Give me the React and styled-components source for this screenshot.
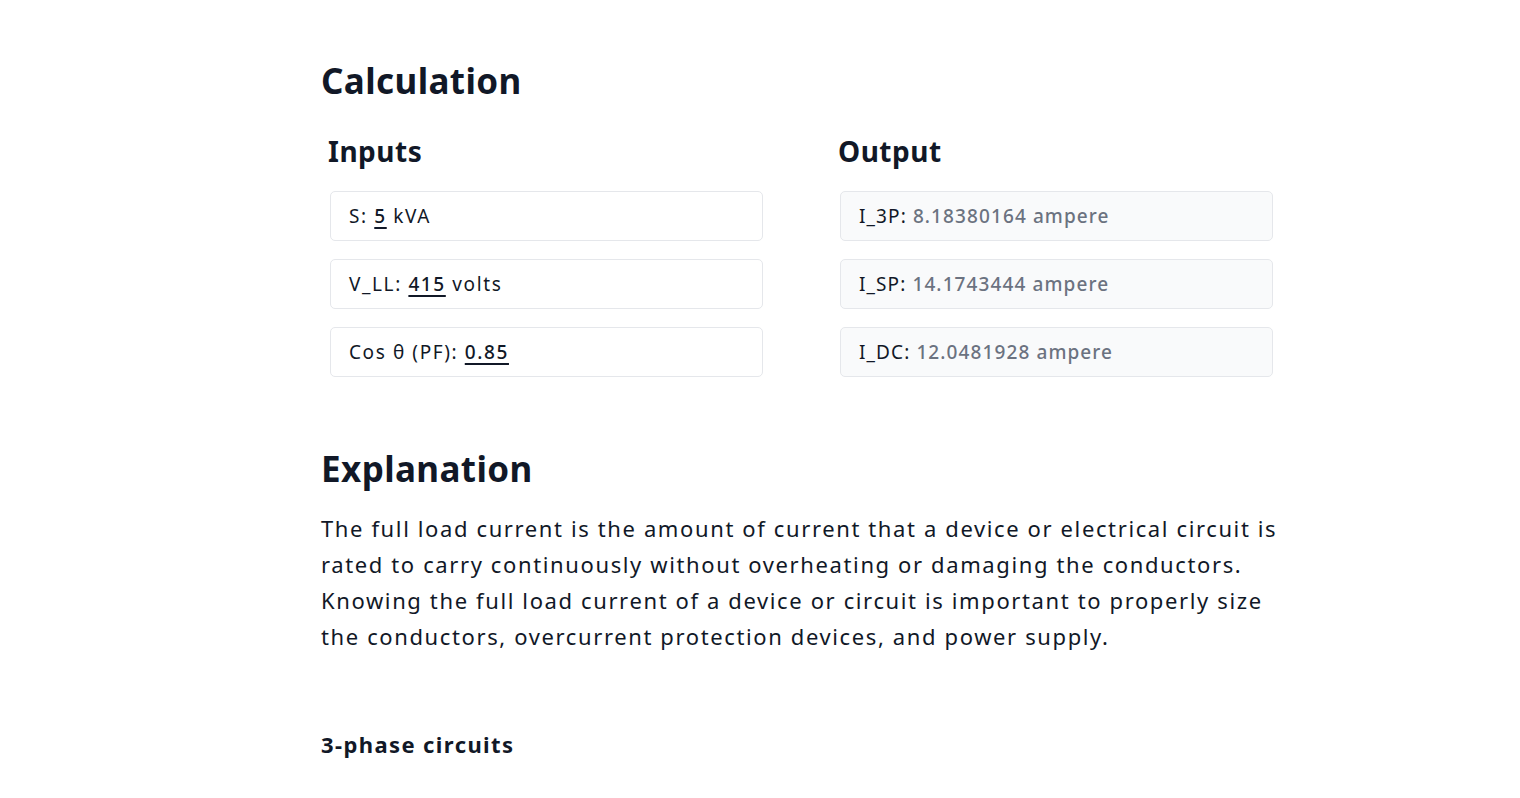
import React from "react";
import styled, { createGlobalStyle } from "styled-components";

const GlobalStyle = createGlobalStyle`
  body {
    margin: 0;
    background: #ffffff;
    font-family: "Noto Sans", "Open Sans", sans-serif;
    color: #111827;
  }
`;

const Page = styled.main`
  width: 960px;
  margin-left: 321px;
  padding-top: 58px;
`;

const Title = styled.h2`
  margin: 0;
  font-size: 35px;
  line-height: 46px;
  font-weight: 700;
  letter-spacing: 0.4px;
  color: #111827;
`;

const Columns = styled.div`
  display: grid;
  grid-template-columns: 510px 510px;
  margin-top: 29px;
`;

const Column = styled.section`
  display: flex;
  flex-direction: column;
  gap: 18px;
`;

const ColumnTitle = styled.h3`
  margin: 0 0 4px 7px;
  font-size: 28px;
  line-height: 36px;
  font-weight: 700;
  letter-spacing: 0.5px;
  color: #111827;
`;

const Field = styled.div`
  box-sizing: border-box;
  margin-left: 9px;
  width: 433px;
  height: 50px;
  display: flex;
  align-items: center;
  padding: 0 18px;
  border: 1px solid #e5e7eb;
  border-radius: 5px;
  background: ${(p) => (p.$readOnly ? "#f9fafb" : "#ffffff")};
  font-size: 19px;
  letter-spacing: ${(p) => (p.$readOnly ? "1.1px" : "1.6px")};
  white-space: pre;
  color: #111827;
`;

const Value = styled.span`
  text-decoration: ${(p) => (p.$editable ? "underline" : "none")};
  text-decoration-thickness: 1.5px;
  text-underline-offset: 4px;
  font-weight: 500;
  color: ${(p) => (p.$editable ? "#111827" : "#6b7280")};
`;

const Explanation = styled.section`
  margin-top: 69px;
`;

const Paragraph = styled.p`
  margin: 18px 0 0;
  font-size: 22px;
  line-height: 36px;
  letter-spacing: 1.62px;
  color: #111827;
`;

const SubTitle = styled.h4`
  margin: 75px 0 0;
  font-size: 22px;
  line-height: 30px;
  font-weight: 700;
  letter-spacing: 1.4px;
  color: #111827;
`;

const inputs = [
  { label: "S:", value: "5", unit: "kVA" },
  { label: "V_LL:", value: "415", unit: "volts" },
  { label: "Cos θ (PF):", value: "0.85" },
];

const outputs = [
  { label: "I_3P:", value: "8.18380164 ampere" },
  { label: "I_SP:", value: "14.1743444 ampere" },
  { label: "I_DC:", value: "12.0481928 ampere" },
];

export default function App() {
  return (
    <>
      <GlobalStyle />
      <Page>
        <Title>Calculation</Title>
        <Columns>
          <Column>
            <ColumnTitle>Inputs</ColumnTitle>
            {inputs.map((f) => (
              <Field key={f.label}>
                {f.label + " "}
                <Value $editable>{f.value}</Value>
                {f.unit ? " " + f.unit : ""}
              </Field>
            ))}
          </Column>
          <Column>
            <ColumnTitle>Output</ColumnTitle>
            {outputs.map((f) => (
              <Field key={f.label} $readOnly>
                {f.label + " "}
                <Value>{f.value}</Value>
              </Field>
            ))}
          </Column>
        </Columns>
        <Explanation>
          <Title>Explanation</Title>
          <Paragraph>
            The full load current is the amount of current that a device or electrical circuit is
            rated to carry continuously without overheating or damaging the conductors. Knowing the
            full load current of a device or circuit is important to properly size the conductors,
            overcurrent protection devices, and power supply.
          </Paragraph>
        </Explanation>
        <SubTitle>3-phase circuits</SubTitle>
      </Page>
    </>
  );
}
